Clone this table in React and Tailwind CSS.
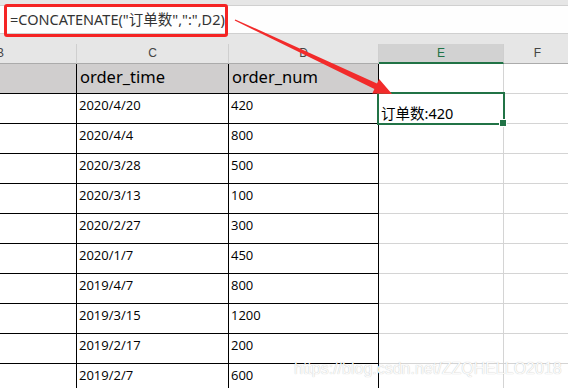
import React from 'react';

const orders = [
  ['2020/4/20', '420'],
  ['2020/4/4', '800'],
  ['2020/3/28', '500'],
  ['2020/3/13', '100'],
  ['2020/2/27', '300'],
  ['2020/1/7', '450'],
  ['2019/4/7', '800'],
  ['2019/3/15', '1200'],
  ['2019/2/17', '200'],
  ['2019/2/7', '600'],
];

const cjk = "font-['Noto_Sans','Noto_Sans_CJK_SC',sans-serif]";

// Column letters strip above the sheet
const ColumnHeaders = () => (
  <div className="flex h-[20px] bg-[#e6e6e6] font-['Liberation_Sans',sans-serif] text-[12px] leading-[19px] text-[#444]">
    <div className="w-[77px] shrink-0 border-r border-b border-r-[#cfcfcf] border-b-[#ababab] overflow-hidden">
      <span className="-ml-[4px]">B</span>
    </div>
    <div className="w-[152px] shrink-0 border-r border-b border-r-[#cfcfcf] border-b-[#ababab] text-center">C</div>
    <div className="w-[150px] shrink-0 border-r border-b border-r-[#cfcfcf] border-b-[#ababab] text-center">D</div>
    <div className="w-[125px] shrink-0 border-r border-b-2 border-r-[#cfcfcf] border-b-[#217346] bg-[#d2d2d2] text-center leading-[18px] text-[#217346]">E</div>
    <div className="flex-1 border-b border-b-[#ababab] text-center pl-[3px]">F</div>
  </div>
);

const DataRow = ({ time, num, extra }) => (
  <div className="flex h-[30px] shrink-0">
    <div className="w-[77px] shrink-0 border-r border-b border-black" />
    <div className="w-[152px] shrink-0 border-r border-b border-black pl-[2px] pt-px font-['Open_Sans',sans-serif] text-[13px] leading-[20px]">{time}</div>
    <div className="w-[150px] shrink-0 border-r border-b border-black pl-[2px] pt-px font-['Open_Sans',sans-serif] text-[13px] leading-[20px]">{num}</div>
    <div className={`w-[125px] shrink-0 border-r border-b border-[#d4d4d4] flex items-end pl-[2px] ${cjk} text-[14.5px] leading-[20px]`}>{extra}</div>
    <div className="flex-1 border-b border-[#d4d4d4]" />
  </div>
);

export default function App() {
  return (
    <div className="relative w-[568px] h-[388px] overflow-hidden bg-white text-black">
      {/* formula bar */}
      <div className="bg-[#e6e6e6] pt-[5px] pb-[10px]">
        <div className={`h-[29px] bg-[#fefefe] border-y border-[#d0d0d0] pl-[10px] ${cjk} text-[14.5px] leading-[27px] text-[#333]`}>
          =CONCATENATE("订单数",":",D2)
        </div>
      </div>

      <ColumnHeaders />

      {/* table header row */}
      <div className="flex h-[30px]">
        <div className="w-[77px] shrink-0 border-r border-b border-black bg-[#d0cece]" />
        <div className={`w-[152px] shrink-0 border-r border-b border-black bg-[#d0cece] pl-[3px] ${cjk} text-[16.5px] leading-[26px]`}>order_time</div>
        <div className={`w-[150px] shrink-0 border-r border-b border-black bg-[#d0cece] pl-[3px] ${cjk} text-[16.5px] leading-[26px]`}>order_num</div>
        <div className="w-[125px] shrink-0 border-r border-b border-[#d4d4d4]" />
        <div className="flex-1 border-b border-[#d4d4d4]" />
      </div>

      {orders.map(([time, num], i) => (
        <DataRow key={i} time={time} num={num} extra={i === 0 ? '订单数:420' : ''} />
      ))}

      {/* active cell E2 */}
      <div className="absolute left-[377px] top-[92px] w-[128px] h-[33px] border-2 border-[#217346]" />
      <div className="absolute left-[500px] top-[120px] w-[6px] h-[6px] bg-[#217346] outline outline-1 outline-white" />

      {/* red callout */}
      <div className="absolute left-[4px] top-[4px] w-[224px] h-[33px] border-[3px] border-[#f52424] rounded-[3px]" />
      <svg className="absolute left-0 top-0" width="568" height="388" viewBox="0 0 568 388">
        <polygon
          points="235.3,19.4 377,83.6 379.1,79.1 392,94 372.3,93.5 374.4,89 234.7,20.6"
          fill="#f22b2b"
        />
      </svg>

      {/* watermark */}
      <div className="absolute left-[294px] top-[359px] font-['Liberation_Sans',sans-serif] text-[16px] leading-[20px] text-[#fbfbfb] [text-shadow:0_0_1px_rgba(0,0,0,0.28)] whitespace-nowrap">
        https://blog.csdn.net/ZZQHELLO2018
      </div>
    </div>
  );
}
